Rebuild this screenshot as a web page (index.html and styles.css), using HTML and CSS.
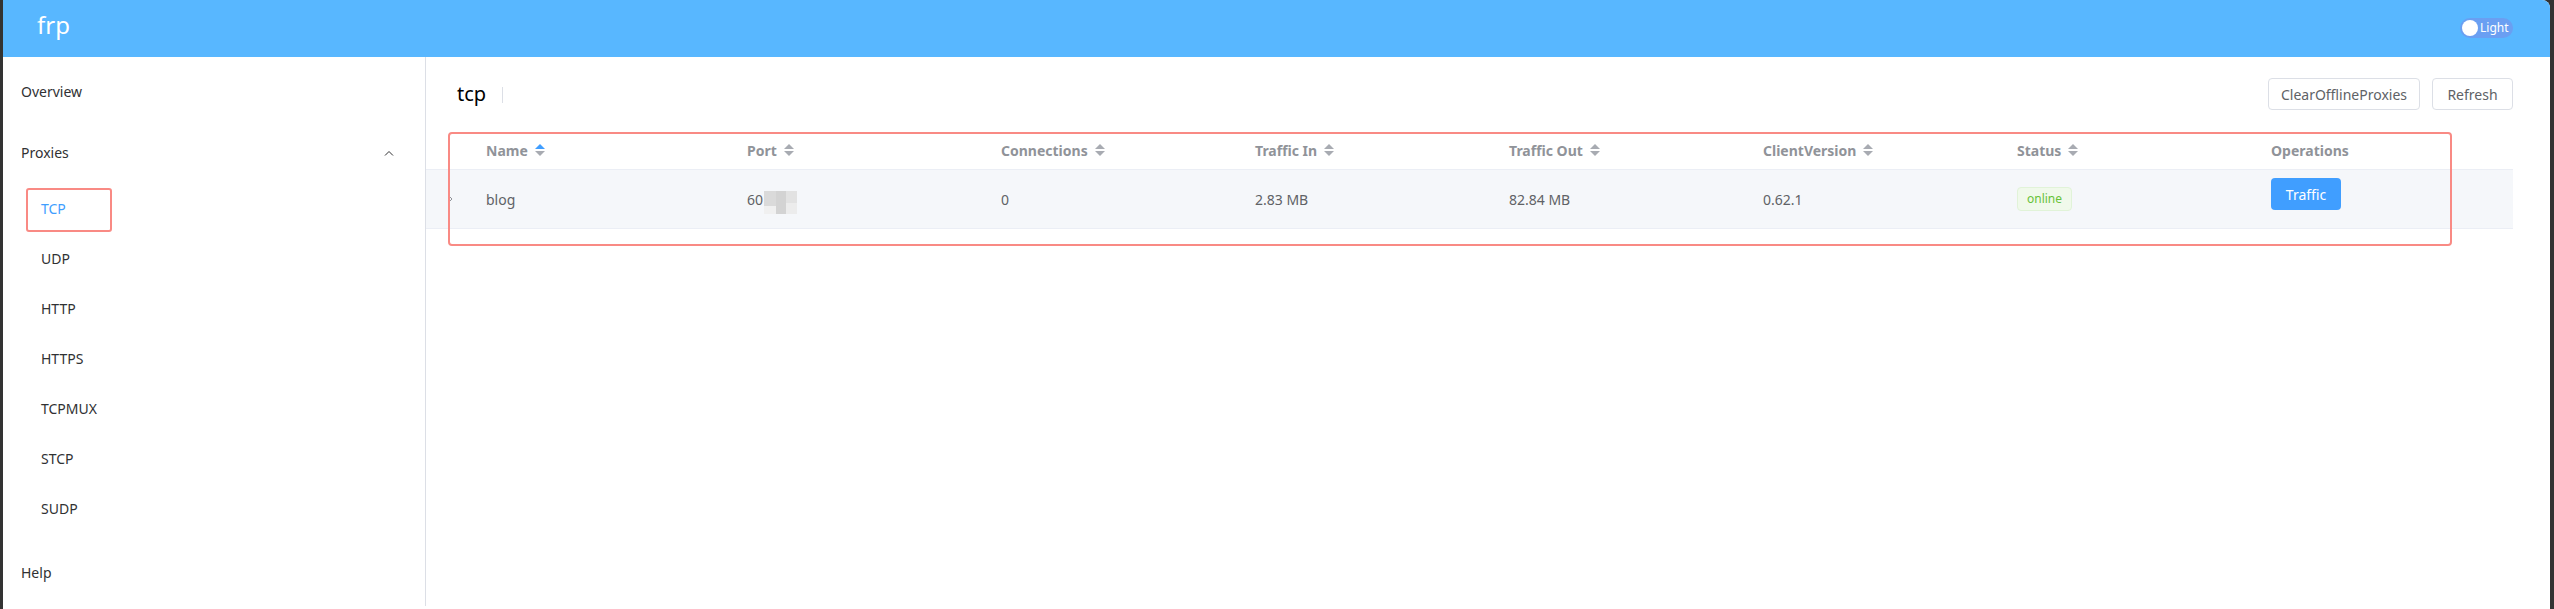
FILE: index.html
```html
<!DOCTYPE html>
<html lang="en">
<head>
    <meta charset="UTF-8">
    <meta name="viewport" content="width=device-width, initial-scale=1.0">
    <title>frp</title>
    <link rel="stylesheet" href="styles.css">
</head>
<body>
    <div class="window">
        <header class="topbar">
            <span class="logo">frp</span>
            <div class="theme-switch">
                <span class="knob"></span>
                <span class="switch-text">Light</span>
            </div>
        </header>
        <div class="layout">
            <aside class="sidebar">
                <ul class="menu">
                    <li class="menu-item">Overview</li>
                    <li class="menu-item submenu-title">
                        Proxies
                        <svg class="arrow-up" width="10" height="6" viewBox="0 0 10 6"><path d="M1 5.5 L5 1.5 L9 5.5" fill="none" stroke="#303133" stroke-width="1"/></svg>
                    </li>
                    <li>
                        <ul class="submenu">
                            <li class="sub-item active">TCP<span class="mark-box"></span></li>
                            <li class="sub-item">UDP</li>
                            <li class="sub-item">HTTP</li>
                            <li class="sub-item">HTTPS</li>
                            <li class="sub-item">TCPMUX</li>
                            <li class="sub-item">STCP</li>
                            <li class="sub-item">SUDP</li>
                        </ul>
                    </li>
                    <li class="menu-item">Help</li>
                </ul>
            </aside>
            <main class="content">
                <div class="page-head">
                    <div class="title">tcp<span class="divider"></span></div>
                    <div class="actions">
                        <button class="btn btn-clear">ClearOfflineProxies</button>
                        <button class="btn btn-refresh">Refresh</button>
                    </div>
                </div>
                <div class="table">
                    <div class="row head">
                        <div class="cell"></div>
                        <div class="cell">Name<span class="caret asc"><i class="up"></i><i class="down"></i></span></div>
                        <div class="cell">Port<span class="caret"><i class="up"></i><i class="down"></i></span></div>
                        <div class="cell">Connections<span class="caret"><i class="up"></i><i class="down"></i></span></div>
                        <div class="cell">Traffic In<span class="caret"><i class="up"></i><i class="down"></i></span></div>
                        <div class="cell">Traffic Out<span class="caret"><i class="up"></i><i class="down"></i></span></div>
                        <div class="cell">ClientVersion<span class="caret"><i class="up"></i><i class="down"></i></span></div>
                        <div class="cell">Status<span class="caret"><i class="up"></i><i class="down"></i></span></div>
                        <div class="cell">Operations</div>
                    </div>
                    <div class="row body">
                        <div class="cell expand">
                            <svg width="6" height="10" viewBox="0 0 6 10"><path d="M1 1 L5 5 L1 9" fill="none" stroke="#909399" stroke-width="1"/></svg>
                        </div>
                        <div class="cell">blog</div>
                        <div class="cell">60<span class="mosaic"></span></div>
                        <div class="cell">0</div>
                        <div class="cell">2.83 MB</div>
                        <div class="cell">82.84 MB</div>
                        <div class="cell">0.62.1</div>
                        <div class="cell"><span class="tag">online</span></div>
                        <div class="cell ops"><button class="btn-primary">Traffic</button></div>
                    </div>
                    <div class="mark-table"></div>
                </div>
            </main>
        </div>
    </div>
</body>
</html>
```

FILE: styles.css
```css
*{
    box-sizing: border-box;
}
body{
    margin: 0;
    background: #333;
    font-family: "Noto Sans", "Microsoft YaHei", "Noto Sans CJK SC", sans-serif;
    font-size: 14px;
    color: #303133;
}
ul{
    list-style: none;
    margin: 0;
    padding: 0;
}
button{
    font-family: inherit;
    cursor: pointer;
}
.window{
    margin: 0 4px 0 3px;
    height: 609px;
    background: #fff;
    border-top-right-radius: 8px;
    overflow: hidden;
}
.topbar{
    height: 57px;
    background: #58b7ff;
    display: flex;
    align-items: center;
    justify-content: space-between;
    padding: 0 37px 0 34px;
}
.logo{
    color: #fff;
    font-size: 24px;
    line-height: 1;
    margin-bottom: 8px;
}
.theme-switch{
    width: 53px;
    height: 20px;
    border-radius: 10px;
    background: #6a9ff2;
    display: flex;
    align-items: center;
    padding-left: 2px;
    margin-bottom: 1px;
}
.knob{
    width: 16px;
    height: 16px;
    border-radius: 50%;
    background: #fff;
}
.switch-text{
    color: #fff;
    font-size: 12px;
    line-height: 1;
    margin-left: 2px;
}
.layout{
    display: flex;
    height: 549px;
}
.sidebar{
    width: 423px;
    flex-shrink: 0;
    border-right: 1px solid #dcdfe6;
}
.menu{
    padding-top: 4px;
}
.menu-item{
    height: 61px;
    display: flex;
    align-items: center;
    padding-left: 18px;
}
.submenu-title{
    justify-content: space-between;
    padding-right: 31px;
}
.submenu{
    padding-bottom: 9px;
}
.sub-item{
    position: relative;
    height: 50px;
    display: flex;
    align-items: center;
    padding-left: 38px;
}
.sub-item.active{
    color: #409eff;
}
.mark-box{
    position: absolute;
    left: 23px;
    top: 5px;
    width: 86px;
    height: 44px;
    border: 2px solid #f98a84;
    border-radius: 3px;
}
.content{
    flex: 1;
    padding-top: 21px;
}
.page-head{
    display: flex;
    justify-content: space-between;
    align-items: center;
    height: 32px;
    padding: 0 37px 0 31px;
}
.title{
    display: flex;
    align-items: center;
    font-size: 20px;
    color: #000;
    line-height: 1;
}
.divider{
    width: 1px;
    height: 16px;
    background: #dcdfe6;
    margin-left: 16px;
    margin-top: 1px;
}
.actions{
    display: flex;
    gap: 12px;
}
.btn{
    height: 32px;
    border: 1px solid #dcdfe6;
    border-radius: 4px;
    background: #fff;
    color: #606266;
    font-size: 14px;
    padding: 0;
}
.btn-clear{
    width: 152px;
}
.btn-refresh{
    width: 81px;
}
.table{
    position: relative;
    margin: 21px 37px 0 0;
}
.row{
    display: grid;
    grid-template-columns: 48px 261px repeat(7, 1fr);
    border-bottom: 1px solid #ebeef5;
}
.row.head{
    height: 39px;
    color: #909399;
    font-weight: bold;
}
.row.body{
    height: 59px;
    background: #f5f7fa;
    color: #606266;
}
.cell{
    display: flex;
    align-items: center;
    padding-left: 12px;
}
.cell.expand{
    padding-left: 21px;
}
.caret{
    display: inline-flex;
    flex-direction: column;
    gap: 2px;
    margin-left: 7px;
}
.caret i{
    display: block;
    width: 0;
    height: 0;
    border-left: 5px solid transparent;
    border-right: 5px solid transparent;
}
.caret .up{
    border-bottom: 5px solid #a8abb2;
}
.caret .down{
    border-top: 5px solid #a8abb2;
}
.caret.asc .up{
    border-bottom-color: #409eff;
}
.mosaic{
    display: inline-block;
    width: 33px;
    height: 23px;
    margin: 7px 0 0 1px;
    background:
        linear-gradient(#dadada, #dadada) 0 0 / 12px 15px no-repeat,
        linear-gradient(#d3d3d3, #d3d3d3) 12px 0 / 10px 23px no-repeat,
        linear-gradient(#e2e2e2, #e2e2e2) 22px 0 / 11px 12px no-repeat,
        linear-gradient(#f0f0f0, #f0f0f0) 0 15px / 12px 8px no-repeat,
        linear-gradient(#ececec, #ececec) 22px 12px / 11px 11px no-repeat;
}
.tag{
    height: 24px;
    padding: 0 9px;
    border: 1px solid #e1f3d8;
    background: #f0f9eb;
    color: #67c23a;
    font-size: 12px;
    line-height: 22px;
    border-radius: 4px;
}
.cell.ops{
    align-items: flex-start;
    padding-top: 8px;
}
.btn-primary{
    width: 70px;
    height: 32px;
    border: 0;
    border-radius: 4px;
    background: #409eff;
    color: #fff;
    font-size: 14px;
    padding: 0;
}
.mark-table{
    position: absolute;
    left: 22px;
    top: 1px;
    width: 2004px;
    height: 114px;
    border: 2px solid #f98a84;
    border-radius: 4px;
}
```
